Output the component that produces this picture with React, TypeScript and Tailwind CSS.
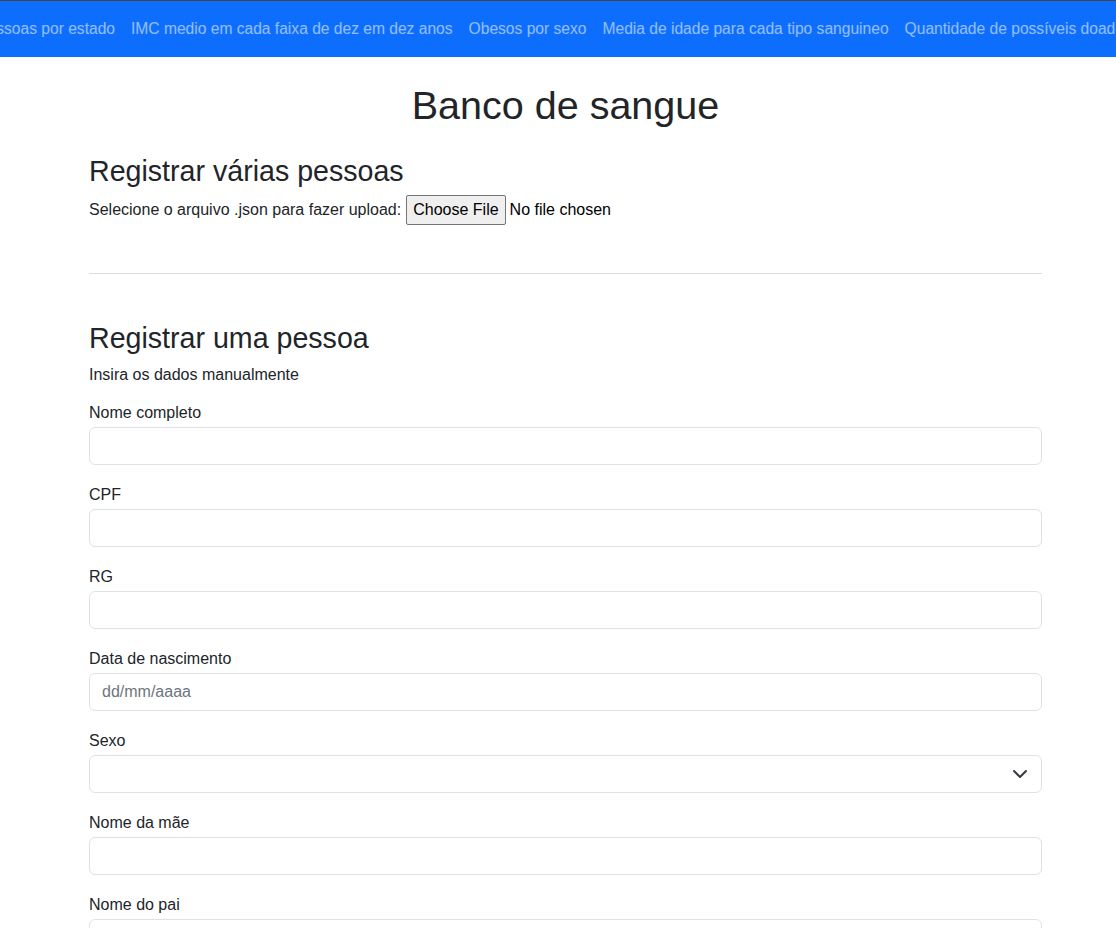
const links = [
    "IMC medio em cada faixa de dez em dez anos",
    "Obesos por sexo",
    "Media de idade para cada tipo sanguineo",
    "Quantidade de possíveis doadores para cada tipo sanguineo receptor",
];

const campos = ["Nome completo", "CPF", "RG"];

function Campo({ label, children }: { label: string; children?: React.ReactNode }) {
    return (
        <div className="mb-[18px]">
            <label className="block h-[26px] leading-6">{label}</label>
            {children ?? (
                <input className="block h-[38px] w-full rounded-[6px] border border-[#dee2e6] bg-white px-3 outline-none" />
            )}
        </div>
    );
}

export default function App() {
    return (
        <div className="min-h-screen bg-white font-['Liberation_Sans',sans-serif] text-base text-[#212529]">
            {/* Navbar */}
            <nav className="flex h-[57px] items-center overflow-hidden border-t border-[#444] bg-[#0d6efd] whitespace-nowrap text-[15.6px] text-white/55">
                <div className="flex w-[123px] shrink-0 justify-end overflow-hidden pr-2">
                    <span>Pessoas por estado</span>
                </div>
                {links.map((l) => (
                    <a key={l} className="shrink-0 px-2">
                        {l}
                    </a>
                ))}
            </nav>

            <div className="ml-[89px] w-[953px]">
                <h1 className="mt-[25px] text-center text-[39.5px] leading-[46px]">Banco de sangue</h1>

                <h2 className="mt-[24px] text-[28.6px] leading-[38px]">Registrar várias pessoas</h2>
                <div className="mt-[5px] flex h-[30px] items-center">
                    <span>Selecione o arquivo .json para fazer upload:</span>
                    <button className="ml-[5px] h-[30px] rounded-[2px] border border-[#767676] bg-[#efefef] px-[6px] text-[#000]">
                        Choose File
                    </button>
                    <span className="ml-[4px] text-[#000]">No file chosen</span>
                </div>

                <hr className="mt-[48px] border-t border-[#dedede]" />

                <h2 className="mt-[45px] text-[28.6px] leading-[38px]">Registrar uma pessoa</h2>
                <p className="mt-[6px] leading-6">Insira os dados manualmente</p>

                <div className="mt-[14px]">
                    {campos.map((c) => (
                        <Campo key={c} label={c} />
                    ))}
                    <Campo label="Data de nascimento">
                        <input
                            placeholder="dd/mm/aaaa"
                            className="block h-[38px] w-full rounded-[6px] border border-[#dee2e6] bg-white px-3 outline-none placeholder:text-[#6c757d]"
                        />
                    </Campo>
                    <Campo label="Sexo">
                        <div className="flex h-[38px] w-full items-center justify-end rounded-[6px] border border-[#dee2e6] bg-white pr-[13px]">
                            <svg width="16" height="12" viewBox="0 2 16 12" fill="none" stroke="#343a40" strokeWidth="2" strokeLinecap="round" strokeLinejoin="round">
                                <path d="m2 5 6 6 6-6" />
                            </svg>
                        </div>
                    </Campo>
                    <Campo label="Nome da mãe" />
                    <Campo label="Nome do pai" />
                </div>
            </div>
        </div>
    );
}
